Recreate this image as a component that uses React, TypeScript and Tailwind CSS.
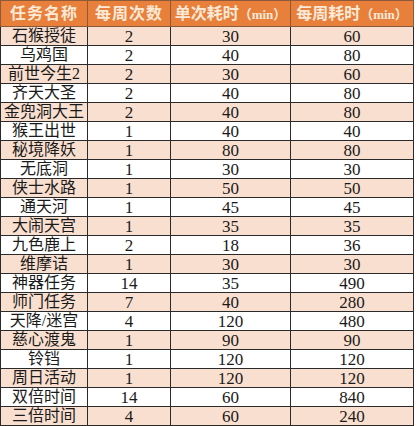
const rows: [string, number, number, number][] = [
  ["石猴授徒", 2, 30, 60],
  ["乌鸡国", 2, 40, 80],
  ["前世今生2", 2, 30, 60],
  ["齐天大圣", 2, 40, 80],
  ["金兜洞大王", 2, 40, 80],
  ["猴王出世", 1, 40, 40],
  ["秘境降妖", 1, 80, 80],
  ["无底洞", 1, 30, 30],
  ["侠士水路", 1, 50, 50],
  ["通天河", 1, 45, 45],
  ["大闹天宫", 1, 35, 35],
  ["九色鹿上", 2, 18, 36],
  ["维摩诘", 1, 30, 30],
  ["神器任务", 14, 35, 490],
  ["师门任务", 7, 40, 280],
  ["天降/迷宫", 4, 120, 480],
  ["慈心渡鬼", 1, 90, 90],
  ["铃铛", 1, 120, 120],
  ["周日活动", 1, 120, 120],
  ["双倍时间", 14, 60, 840],
  ["三倍时间", 4, 60, 240],
];

const font = {
  fontFamily: '"Liberation Serif", "Noto Sans CJK SC", serif',
};

export default function App() {
  return (
    <div className="w-[417px] h-[426px] bg-white overflow-hidden" style={font}>
      <table className="border-collapse table-fixed w-[413px] text-[16px] leading-none text-[#1a1a1a]">
        <colgroup>
          <col className="w-[87px]" />
          <col className="w-[83px]" />
          <col className="w-[120px]" />
          <col className="w-[123px]" />
        </colgroup>
        <thead>
          <tr className="h-[26px] bg-[#e8803c] text-[#fbe9d8] font-bold">
            <th className="border border-[#8a5a3a] font-bold tracking-[1px]">任务名称</th>
            <th className="border border-[#8a5a3a] font-bold tracking-[1px]">每周次数</th>
            <th className="border border-[#8a5a3a] font-bold whitespace-nowrap">
              单次耗时<span className="text-[13px]">（min）</span>
            </th>
            <th className="border border-[#8a5a3a] font-bold whitespace-nowrap">
              每周耗时<span className="text-[13px]">（min）</span>
            </th>
          </tr>
        </thead>
        <tbody>
          {rows.map(([name, times, each, total], i) => (
            <tr key={name} className={`h-[19px] ${i % 2 === 0 ? "bg-[#f9dfcf]" : "bg-white"}`}>
              <td className="border border-[#2a2a2a] text-center whitespace-nowrap p-0">{name}</td>
              <td className="border border-[#2a2a2a] text-center p-0 text-[17px]">{times}</td>
              <td className="border border-[#2a2a2a] text-center p-0 text-[17px]">{each}</td>
              <td className="border border-[#2a2a2a] text-center p-0 text-[17px]">{total}</td>
            </tr>
          ))}
        </tbody>
      </table>
    </div>
  );
}
